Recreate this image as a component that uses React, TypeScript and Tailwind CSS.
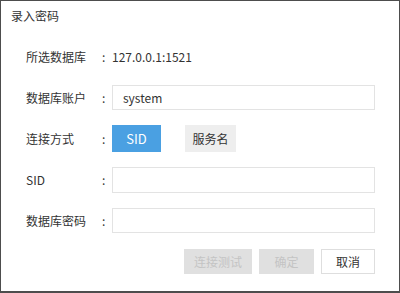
export default function App() {
  const font = { fontFamily: '"Noto Sans CJK SC", "Noto Sans", sans-serif' }

  return (
    <div
      className="w-[400px] h-[293px] bg-white border border-b-2 border-[#4d4d4d] flex flex-col text-[12px] text-[#333]"
      style={font}
    >
      <div className="h-[30px] pl-[10px] flex items-center text-[#333]">录入密码</div>

      <div className="flex flex-col pt-[5px] pl-[25px] pr-[24px]">
        <div className="h-[41px] flex items-center">
          <div className="w-[76px]">所选数据库</div>
          <div className="w-[10px]">:</div>
          <div>127.0.0.1:1521</div>
        </div>

        <div className="h-[41px] flex items-center">
          <div className="w-[76px]">数据库账户</div>
          <div className="w-[10px]">:</div>
          <div className="flex-1 h-[25px] border border-[#e3e3e3] flex items-center pl-[10px]">system</div>
        </div>

        <div className="h-[41px] flex items-center">
          <div className="w-[76px]">连接方式</div>
          <div className="w-[10px]">:</div>
          <div className="flex items-center gap-[24px]">
            <button className="w-[49px] h-[27px] bg-[#4aa0e2] text-white text-[13px] flex items-center justify-center">
              SID
            </button>
            <button className="w-[51px] h-[27px] bg-[#eeeeee] text-[#333] text-[12px] flex items-center justify-center">
              服务名
            </button>
          </div>
        </div>

        <div className="h-[41px] flex items-center">
          <div className="w-[76px]">SID</div>
          <div className="w-[10px]">:</div>
          <div className="flex-1 h-[26px] border border-[#e3e3e3]" />
        </div>

        <div className="h-[41px] flex items-center">
          <div className="w-[76px]">数据库密码</div>
          <div className="w-[10px]">:</div>
          <div className="flex-1 h-[25px] border border-[#e3e3e3]" />
        </div>

        <div className="h-[41px] flex items-center justify-end gap-[7px]">
          <button className="w-[68px] h-[25px] bg-[#e0e0e0] text-[#c4c4c4] flex items-center justify-center">
            连接测试
          </button>
          <button className="w-[55px] h-[25px] bg-[#e0e0e0] text-[#c4c4c4] flex items-center justify-center">
            确定
          </button>
          <button className="w-[54px] h-[25px] bg-white border border-[#dedede] text-[#333] flex items-center justify-center">
            取消
          </button>
        </div>
      </div>
    </div>
  )
}
